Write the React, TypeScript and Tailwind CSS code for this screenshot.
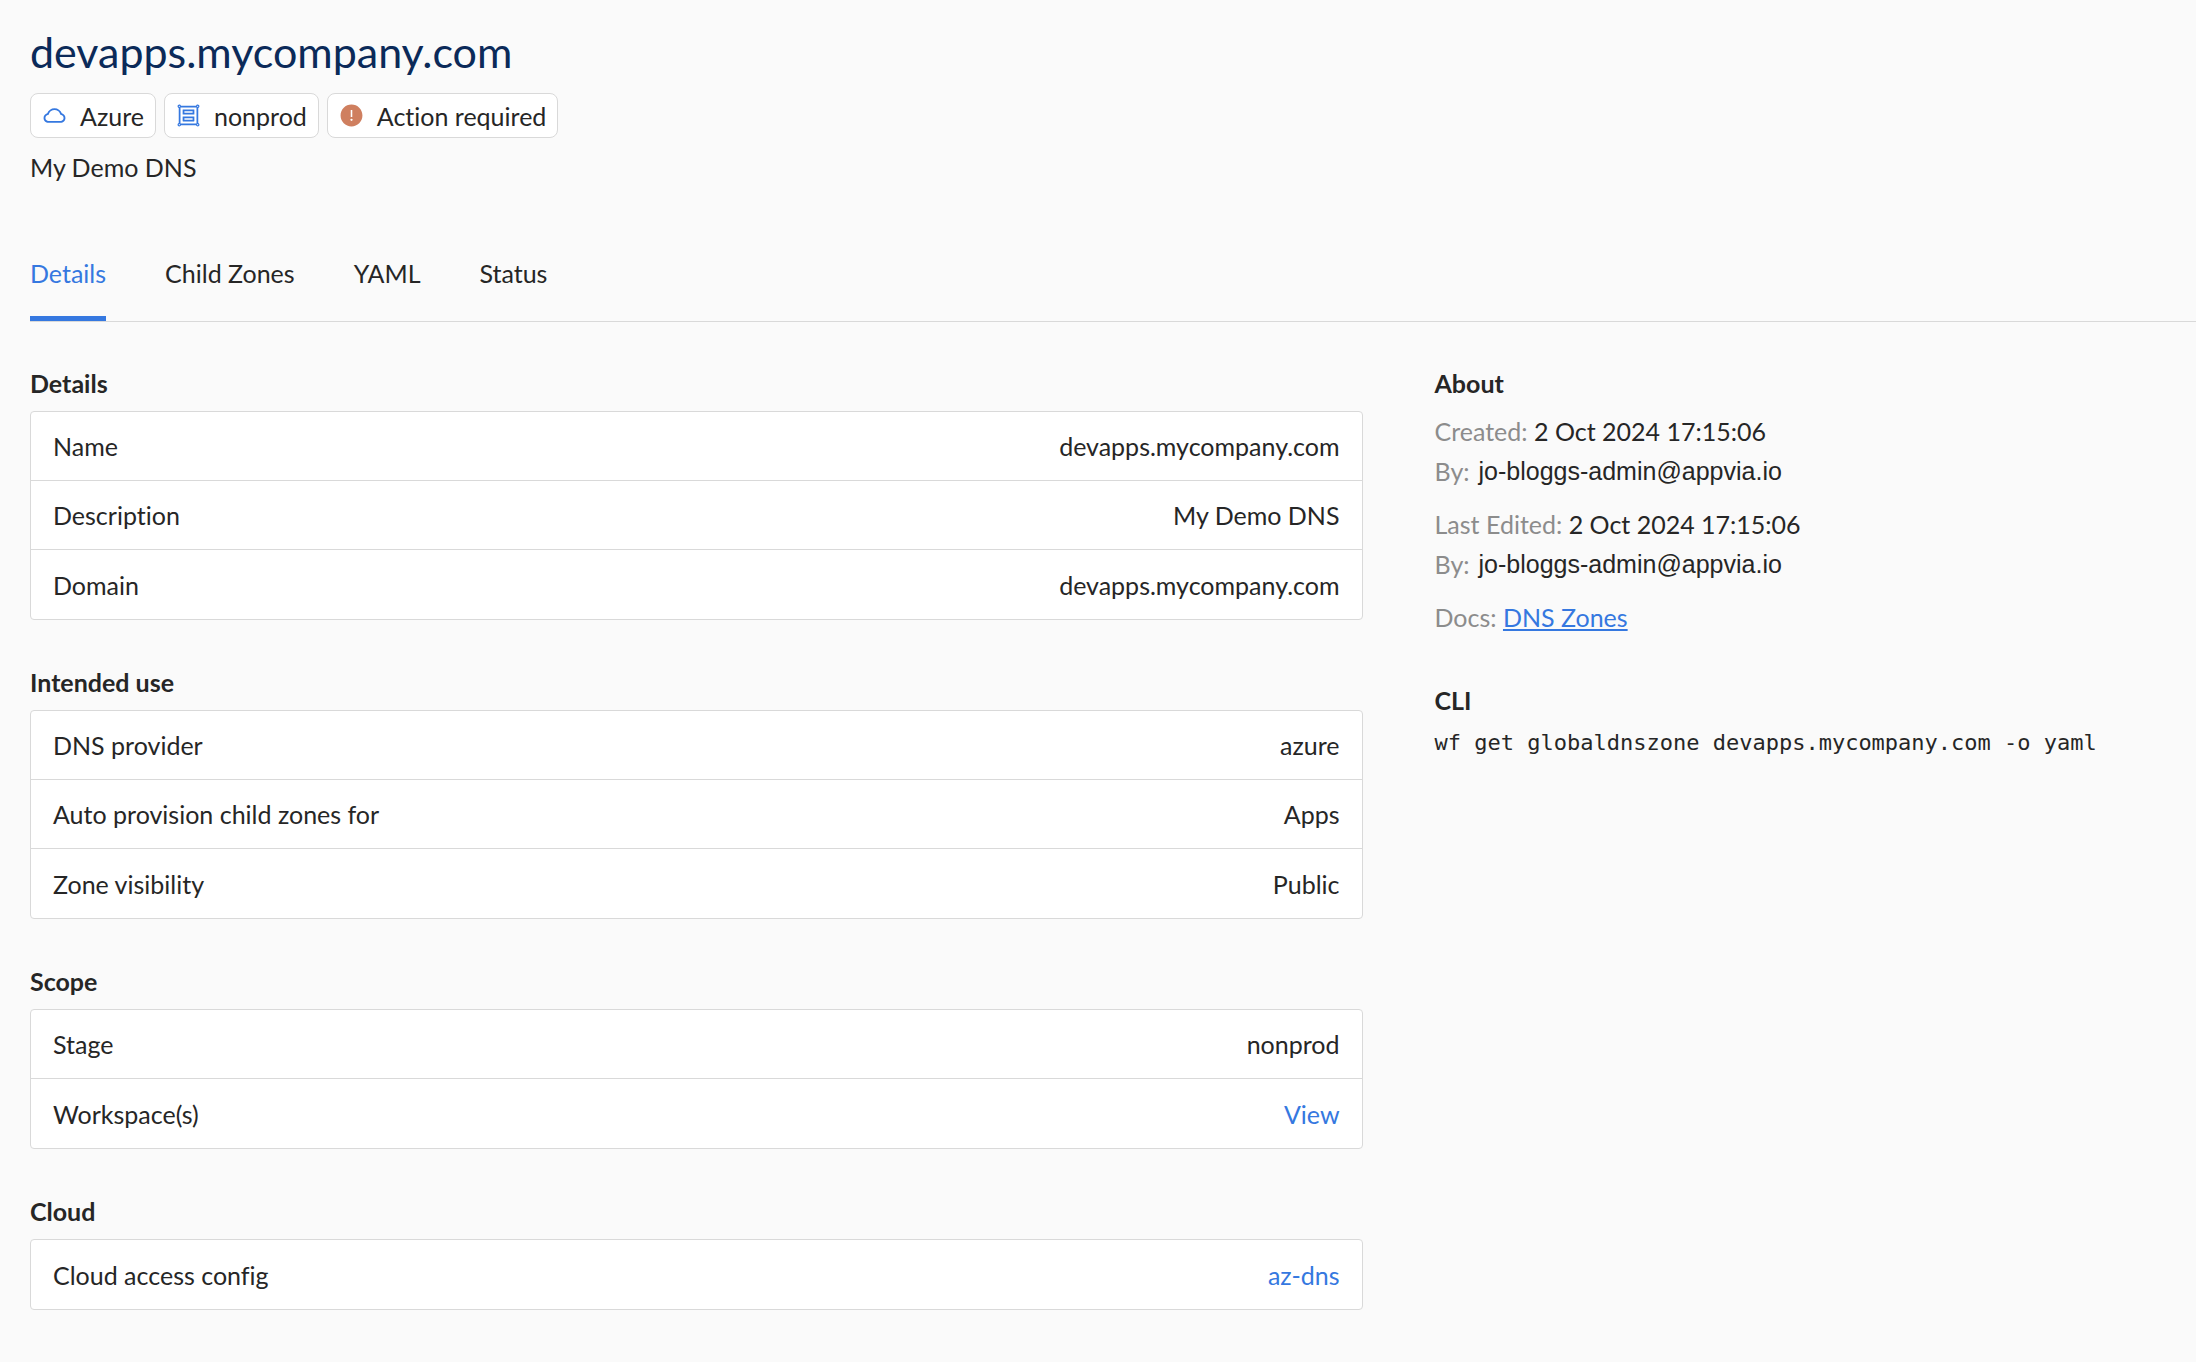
import { useState } from 'react';
import type { ReactNode } from 'react';
import {
  AiFillExclamationCircle,
  AiOutlineCloud,
  AiOutlineGroup,
} from 'react-icons/ai';

const tabs = ['Details', 'Child Zones', 'YAML', 'Status'];

type Row = { label: string; value: string; href?: string };

const sections: { title: string; rows: Row[] }[] = [
  {
    title: 'Details',
    rows: [
      { label: 'Name', value: 'devapps.mycompany.com' },
      { label: 'Description', value: 'My Demo DNS' },
      { label: 'Domain', value: 'devapps.mycompany.com' },
    ],
  },
  {
    title: 'Intended use',
    rows: [
      { label: 'DNS provider', value: 'azure' },
      { label: 'Auto provision child zones for', value: 'Apps' },
      { label: 'Zone visibility', value: 'Public' },
    ],
  },
  {
    title: 'Scope',
    rows: [
      { label: 'Stage', value: 'nonprod' },
      { label: 'Workspace(s)', value: 'View', href: '#workspaces' },
    ],
  },
  {
    title: 'Cloud',
    rows: [{ label: 'Cloud access config', value: 'az-dns', href: '#az-dns' }],
  },
];

function Tag({ icon, children }: { icon: ReactNode; children: ReactNode }) {
  return (
    <span className="flex h-[45px] items-center gap-[13px] rounded-lg border border-[#d9d9d9] bg-white px-[11px]">
      {icon}
      {children}
    </span>
  );
}

function Section({ title, rows }: { title: string; rows: Row[] }) {
  return (
    <section>
      <h2 className="font-bold">{title}</h2>
      <dl className="mt-2 divide-y divide-[#d9d9d9] rounded-sm border border-[#d9d9d9] bg-white">
        {rows.map((row) => (
          <div
            key={row.label}
            className="flex min-h-[69px] items-center justify-between px-[22px]"
          >
            <dt>{row.label}</dt>
            <dd>
              {row.href ? (
                <a href={row.href} className="text-[#3578e0]">
                  {row.value}
                </a>
              ) : (
                row.value
              )}
            </dd>
          </div>
        ))}
      </dl>
    </section>
  );
}

function Edit({ label, date, by }: { label: string; date: string; by: string }) {
  return (
    <div>
      <p>
        <span className="text-[#8c8c8c]">{label}:</span> {date}
      </p>
      <p className="flex gap-[9px]">
        <span className="text-[#8c8c8c]">By:</span>
        <span className="font-['Liberation_Sans',sans-serif]">{by}</span>
      </p>
    </div>
  );
}

export default function App() {
  const [active, setActive] = useState('Details');

  return (
    <main className="min-h-screen bg-[#fafafa] pt-[22px] pb-[52px] pl-[30px] font-[Lato,sans-serif] text-[25px] leading-10 text-[#262626] [font-variant-ligatures:none]">
      <header>
        <h1 className="text-[43px] leading-[60px] text-[#0b2a59]">
          devapps.mycompany.com
        </h1>
        <div className="mt-[11px] flex flex-wrap gap-2">
          <Tag icon={<AiOutlineCloud className="size-[25px] text-[#3578e0]" />}>
            Azure
          </Tag>
          <Tag icon={<AiOutlineGroup className="size-[25px] text-[#3578e0]" />}>
            nonprod
          </Tag>
          <Tag
            icon={
              <AiFillExclamationCircle className="size-[25px] text-[#cf7f5f]" />
            }
          >
            Action required
          </Tag>
        </div>
        <p className="mt-[9px]">My Demo DNS</p>
      </header>

      <div
        role="tablist"
        className="mt-[66px] flex gap-[59px] border-b border-[#d9d9d9]"
      >
        {tabs.map((tab) => (
          <button
            key={tab}
            role="tab"
            aria-selected={active === tab}
            onClick={() => setActive(tab)}
            className={`border-b-[5px] pb-[23px] ${
              active === tab
                ? 'border-[#3578e0] text-[#3578e0]'
                : 'border-transparent'
            }`}
          >
            {tab}
          </button>
        ))}
      </div>

      <div className="mt-[41px] grid grid-cols-[7fr_4fr] gap-[72px]">
        <div className="flex flex-col gap-[42px]">
          {sections.map((section) => (
            <Section key={section.title} {...section} />
          ))}
        </div>

        <aside>
          <h2 className="font-bold">About</h2>
          <div className="mt-2 flex flex-col gap-[13px]">
            <Edit
              label="Created"
              date="2 Oct 2024 17:15:06"
              by="jo-bloggs-admin@appvia.io"
            />
            <Edit
              label="Last Edited"
              date="2 Oct 2024 17:15:06"
              by="jo-bloggs-admin@appvia.io"
            />
            <p>
              <span className="text-[#8c8c8c]">Docs:</span>{' '}
              <a href="#docs" className="text-[#3578e0] underline">
                DNS Zones
              </a>
            </p>
          </div>
          <h2 className="mt-[43px] font-bold">CLI</h2>
          <code className="font-['DejaVu_Sans_Mono',monospace] text-[22px]">
            wf get globaldnszone devapps.mycompany.com -o yaml
          </code>
        </aside>
      </div>
    </main>
  );
}
